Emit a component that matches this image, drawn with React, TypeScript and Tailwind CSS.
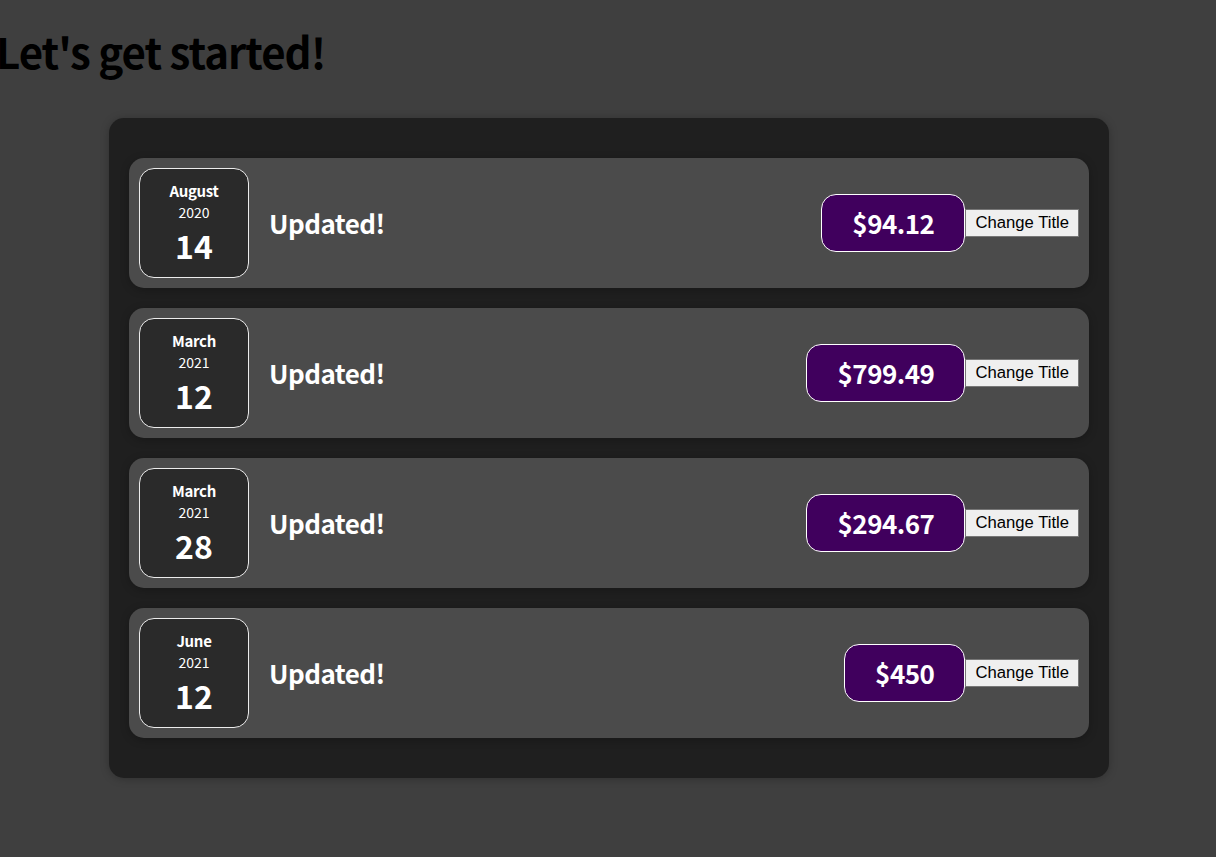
const expenses = [
  { id: "e1", month: "August", year: "2020", day: "14", title: "Updated!", amount: "$94.12" },
  { id: "e2", month: "March", year: "2021", day: "12", title: "Updated!", amount: "$799.49" },
  { id: "e3", month: "March", year: "2021", day: "28", title: "Updated!", amount: "$294.67" },
  { id: "e4", month: "June", year: "2021", day: "12", title: "Updated!", amount: "$450" },
];

type Expense = (typeof expenses)[number];

function ExpenseDate({ item }: { item: Expense }) {
  return (
    <div className="flex h-[110px] w-[110px] shrink-0 flex-col items-center justify-center rounded-[15px] border border-[#ececec] bg-[#2a2a2a] text-white">
      <div className="text-[15px] leading-[20px] font-bold tracking-[-0.3px]">{item.month}</div>
      <div className="text-[14px] leading-[22px]">{item.year}</div>
      <div className="mt-[2px] text-[32px] leading-[40px] font-bold">{item.day}</div>
    </div>
  );
}

function ExpenseItem({ item }: { item: Expense }) {
  return (
    <div className="flex items-center rounded-[15px] bg-[#4b4b4b] p-[10px] shadow-[0_2px_8px_rgba(0,0,0,0.25)]">
      <ExpenseDate item={item} />
      <div className="ml-[20px] flex flex-1 items-center justify-between">
        <h2 className="text-[26px] leading-[34px] font-bold tracking-[-0.5px] text-white">{item.title}</h2>
        <div className="rounded-[15px] border border-white bg-[#40005d] px-[30px] py-[10px] text-[26px] leading-[36px] font-bold tracking-[-0.5px] text-white">
          {item.amount}
        </div>
      </div>
      <button className="h-[28px] border border-[#767676] bg-[#efefef] px-[9px] font-['Liberation_Sans',Arial,sans-serif] text-[16.67px] leading-[20px] text-black">
        Change Title
      </button>
    </div>
  );
}

export default function App() {
  return (
    <div className="min-h-[857px] bg-[#3f3f3f] font-['Noto_Sans_CJK_JP','Noto_Sans',sans-serif]">
      <h2 className="ml-[-4px] pt-[21px] text-[42px] leading-[60px] font-bold tracking-[-1px] text-black">Let's get started!</h2>
      <div className="mt-[37px] ml-[109px] flex w-[1000px] flex-col gap-[20px] rounded-[15px] bg-[#1f1f1f] px-[20px] py-[40px] shadow-[0_1px_8px_rgba(0,0,0,0.25)]">
        {expenses.map((e) => (
          <ExpenseItem key={e.id} item={e} />
        ))}
      </div>
    </div>
  );
}
